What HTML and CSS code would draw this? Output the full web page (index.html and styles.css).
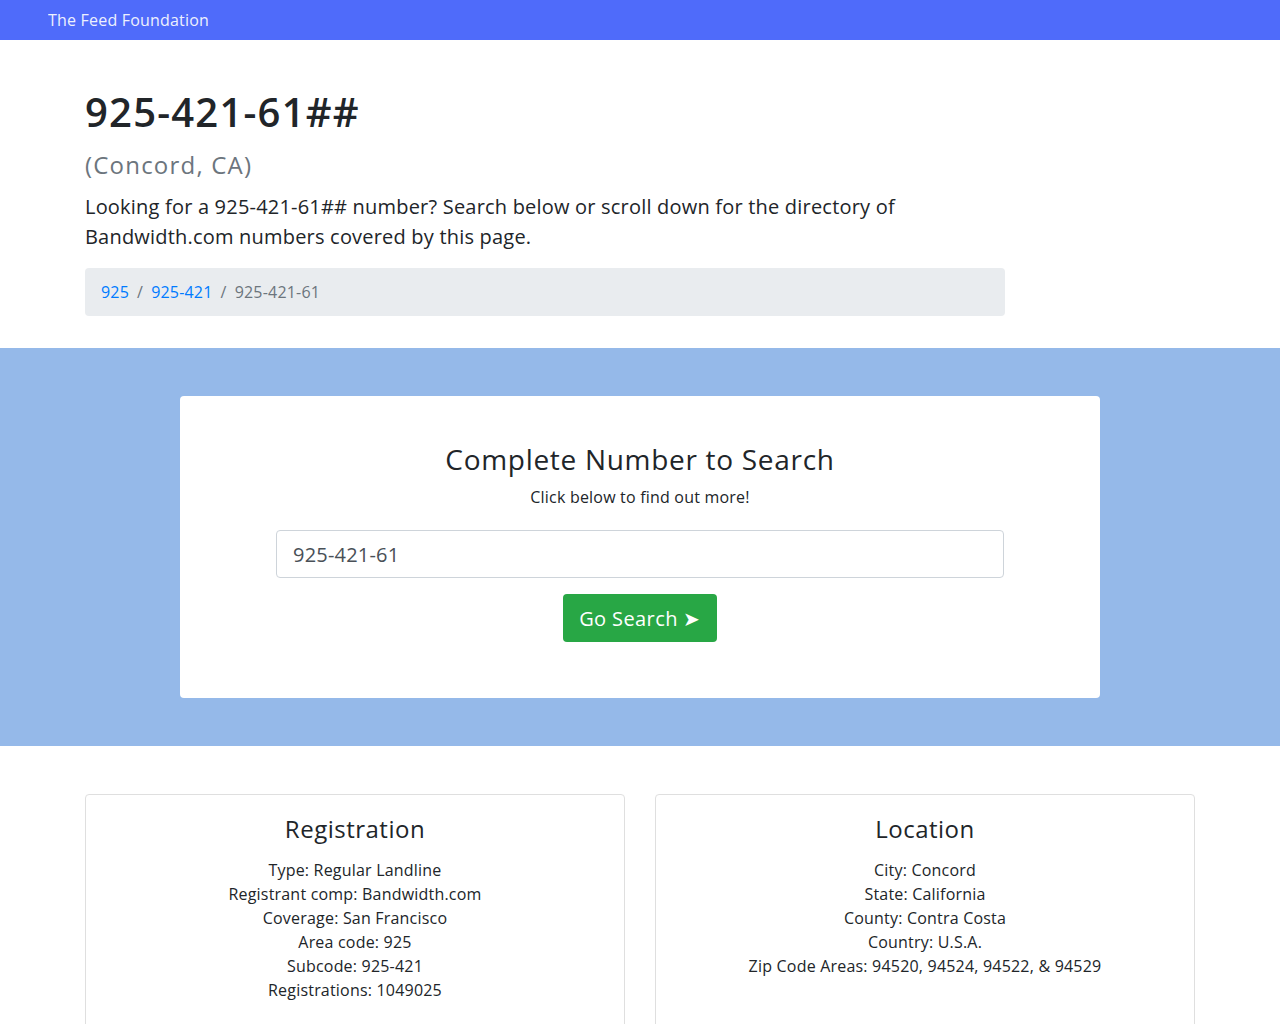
FILE: index.html
```html
<!DOCTYPE html>
<html lang="en">

<head>
    <meta charset="UTF-8">
    <meta name="viewport" content="width=device-width, initial-scale=1.0">
    <title>925-421-61## (Concord, CA)</title>
    <link rel="stylesheet" href="styles.css">
</head>

<body>
    <nav class="navbar">
        <a class="navbar-brand" href="#">The Feed Foundation</a>
    </nav>

    <div class="container intro">
        <h1 class="page-title">925-421-61##</h1>
        <h2 class="subtitle">(Concord, CA)</h2>
        <div class="col-10">
            <p class="lead">Looking for a 925-421-61## number? Search below or scroll down for the directory of Bandwidth.com numbers covered by this page.</p>
            <ol class="breadcrumb">
                <li><a href="#">925</a></li>
                <li><a href="#">925-421</a></li>
                <li class="active">925-421-61</li>
            </ol>
        </div>
    </div>

    <section class="search-band">
        <div class="search-card">
            <h3 class="search-title">Complete Number to Search</h3>
            <p class="search-hint">Click below to find out more!</p>
            <input type="text" class="search-input" value="925-421-61">
            <button class="btn-go">Go Search &#10148;</button>
        </div>
    </section>

    <div class="container info-row">
        <div class="info-card">
            <h4>Registration</h4>
            <p>Type: Regular Landline</p>
            <p>Registrant comp: Bandwidth.com</p>
            <p>Coverage: San Francisco</p>
            <p>Area code: 925</p>
            <p>Subcode: 925-421</p>
            <p>Registrations: 1049025</p>
        </div>
        <div class="info-card">
            <h4>Location</h4>
            <p>City: Concord</p>
            <p>State: California</p>
            <p>County: Contra Costa</p>
            <p>Country: U.S.A.</p>
            <p>Zip Code Areas: 94520, 94524, 94522, &amp; 94529</p>
        </div>
    </div>
</body>

</html>
```

FILE: styles.css
```css
body {
    margin: 0;
    font-family: "Open Sans", Arial, sans-serif;
    font-size: 16px;
    line-height: 1.5;
    letter-spacing: 0.2px;
    color: #212529;
    background-color: #fff;
}

a {
    color: #007bff;
    text-decoration: none;
}

.navbar {
    height: 40px;
    display: flex;
    align-items: center;
    padding: 0 48px;
    background-color: #4f6bfa;
}

.navbar-brand {
    color: #fff;
    font-size: 16px;
    opacity: 0.9;
}

.container {
    max-width: 1110px;
    margin: 0 auto;
    padding: 0 15px;
}

.intro {
    padding-top: 48px;
    padding-bottom: 32px;
}

.page-title {
    margin: 0;
    font-size: 40px;
    font-weight: 600;
    line-height: 1.2;
    letter-spacing: 1.2px;
}

.subtitle {
    margin: 15px 0 12px;
    font-size: 24px;
    font-weight: 400;
    line-height: 1.2;
    letter-spacing: 1.2px;
    color: #6c757d;
}

.col-10 {
    width: 920px;
}

.lead {
    margin: 0 0 16px;
    font-size: 20px;
    line-height: 30px;
}

.breadcrumb {
    display: flex;
    margin: 0;
    padding: 12px 16px;
    list-style: none;
    background-color: #e9ecef;
    border-radius: 4px;
    font-size: 16px;
}

.breadcrumb li + li::before {
    content: "/";
    padding: 0 8px;
    color: #6c757d;
}

.breadcrumb .active {
    color: #6c757d;
}

.search-band {
    padding: 48px 0;
    background-color: #95b9e9;
}

.search-card {
    width: 920px;
    margin: 0 auto;
    padding: 47px 96px 56px;
    box-sizing: border-box;
    background-color: #fff;
    border-radius: 4px;
    text-align: center;
}

.search-title {
    margin: 0 0 9px;
    font-size: 28px;
    font-weight: 500;
    line-height: 1.2;
    letter-spacing: 0.7px;
}

.search-hint {
    margin: 0 0 21px;
    font-size: 16px;
}

.search-input {
    display: block;
    width: 100%;
    height: 48px;
    box-sizing: border-box;
    padding: 8px 16px;
    font-family: inherit;
    font-size: 20px;
    letter-spacing: 0.2px;
    color: #495057;
    border: 1px solid #ced4da;
    border-radius: 4px;
}

.btn-go {
    margin-top: 16px;
    height: 48px;
    padding: 0 16px;
    font-family: inherit;
    font-size: 20px;
    letter-spacing: 0.4px;
    color: #fff;
    background-color: #28a745;
    border: none;
    border-radius: 4px;
    cursor: pointer;
}

.info-row {
    display: flex;
    gap: 30px;
    padding-top: 48px;
}

.info-card {
    flex: 1;
    min-height: 260px;
    padding: 20px;
    border: 1px solid #dfdfdf;
    border-radius: 4px;
    text-align: center;
}

.info-card h4 {
    margin: 0 0 14px;
    font-size: 24px;
    font-weight: 400;
    line-height: 1.2;
    letter-spacing: 0.5px;
}

.info-card p {
    margin: 0;
    font-size: 16px;
}
```
